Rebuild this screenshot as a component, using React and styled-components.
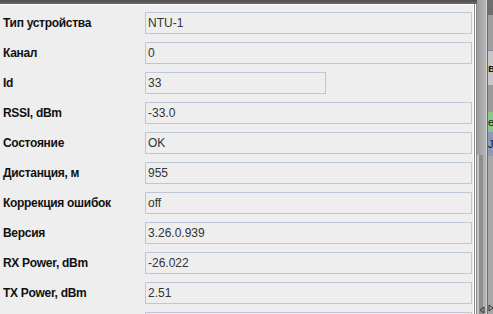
import React from "react";
import styled, { createGlobalStyle } from "styled-components";

const Global = createGlobalStyle`
  html, body {
    margin: 0;
    padding: 0;
    background: #8c8c8c;
  }
`;

const Frame = styled.div`
  display: flex;
  width: 493px;
  height: 314px;
  overflow: hidden;
  font-family: "Liberation Sans", Arial, sans-serif;
`;

const Dialog = styled.div`
  display: flex;
  flex-direction: column;
  width: 477px;
  flex: 0 0 477px;
`;

const TopBar = styled.div`
  height: 4px;
  flex: 0 0 4px;
  background: linear-gradient(#4e4e4e, #6a6a6a);
`;

const Body = styled.div`
  display: flex;
  flex: 1;
  min-height: 0;
`;

const FormPanel = styled.div`
  flex: 0 0 473px;
  background: #eeeeee;
  border-top: 1px solid #ffffff;
  box-sizing: border-box;
  padding: 7px 0 0 3px;
  display: grid;
  grid-template-columns: 142px 327px;
  grid-auto-rows: 22px;
  row-gap: 8px;
  align-items: center;
  align-content: start;
`;

const Edge = styled.div`
  flex: 0 0 4px;
  background: linear-gradient(
    to right,
    #ffffff 0 1px,
    #8a8a8a 1px 2px,
    #ffffff 2px 3px,
    #8a8a8a 3px 4px
  );
`;

const Label = styled.div`
  font-size: 12px;
  font-weight: bold;
  letter-spacing: -0.3px;
  color: #111111;
  white-space: nowrap;
`;

const Field = styled.div`
  box-sizing: border-box;
  height: 22px;
  width: ${(p) => (p.$narrow ? "181px" : "327px")};
  border: 1px solid #bcc8d8;
  background: #eeeeee;
  color: #333333;
  font-size: 12px;
  line-height: 20px;
  padding-left: 2px;
  white-space: nowrap;
`;

const Scroll = styled.div`
  flex: 0 0 9px;
  display: flex;
  flex-direction: column;
  background: #b4b4b4;
  border-right: 1px solid #cfcfcf;
`;

const ScrollTrack = styled.div`
  height: 155px;
  flex: 0 0 155px;
  background: linear-gradient(to right, #9c9c9c, #b8b8b8);
`;

const ScrollThumb = styled.div`
  flex: 1;
  background: linear-gradient(to right, #c4c4c4 0 2px, #8e8e8e 2px 6px, #b0b0b0 6px);
  display: flex;
  align-items: flex-end;
  justify-content: center;
`;

const Behind = styled.div`
  flex: 1;
  display: flex;
  flex-direction: column;
  background: #a2a2a2;
  border-left: 1px solid #6c6c6c;
  overflow: hidden;
`;

const Strip = styled.div`
  height: ${(p) => p.$h}px;
  flex: 0 0 ${(p) => p.$h}px;
  background: ${(p) => p.$bg};
  border-bottom: ${(p) => (p.$line ? `1px solid ${p.$line}` : "none")};
  font-size: 11px;
  font-weight: ${(p) => (p.$bold ? "bold" : "normal")};
  color: #1a1a1a;
  line-height: ${(p) => p.$h}px;
  white-space: nowrap;
  box-sizing: border-box;
`;

const rows = [
  ["Тип устройства", "NTU-1"],
  ["Канал", "0"],
  ["Id", "33", true],
  ["RSSI, dBm", "-33.0"],
  ["Состояние", "OK"],
  ["Дистанция, м", "955"],
  ["Коррекция ошибок", "off"],
  ["Версия", "3.26.0.939"],
  ["RX Power, dBm", "-26.022"],
  ["TX Power, dBm", "2.51"],
  ["", ""],
];

export default function App() {
  return (
    <>
      <Global />
      <Frame>
        <Dialog>
          <TopBar />
          <Body>
            <FormPanel>
              {rows.map(([label, value, narrow], i) => (
                <React.Fragment key={i}>
                  <Label>{label}</Label>
                  <Field $narrow={narrow}>{value}</Field>
                </React.Fragment>
              ))}
            </FormPanel>
            <Edge />
          </Body>
        </Dialog>
        <Scroll>
          <ScrollTrack />
          <ScrollThumb>
            <svg width="6" height="8" viewBox="0 0 6 8">
              <path d="M5 1 L1 4 L5 7 Z" fill="none" stroke="#333" strokeWidth="1" />
            </svg>
          </ScrollThumb>
        </Scroll>
        <Behind>
          <Strip $h={15} $bg="#6e6e6e" />
          <Strip $h={36} $bg="#9e9e9e" $line="#7d8ca4" />
          <Strip $h={34} $bg="#c6c6c6" $bold>
            вт
          </Strip>
          <Strip $h={27} $bg="#9a9a9a" $line="#8a9ab4" />
          <Strip $h={20} $bg="#8dc48b">
            e
          </Strip>
          <Strip $h={24} $bg="#8a9bbb">
            J-
          </Strip>
          <Strip $h={158} $bg="#a8a8a8">
            <svg width="6" height="8" viewBox="0 0 6 8" style={{ marginTop: 148 }}>
              <path d="M1 1 L5 4 L1 7 Z" fill="none" stroke="#333" strokeWidth="1" />
            </svg>
          </Strip>
        </Behind>
      </Frame>
    </>
  );
}
